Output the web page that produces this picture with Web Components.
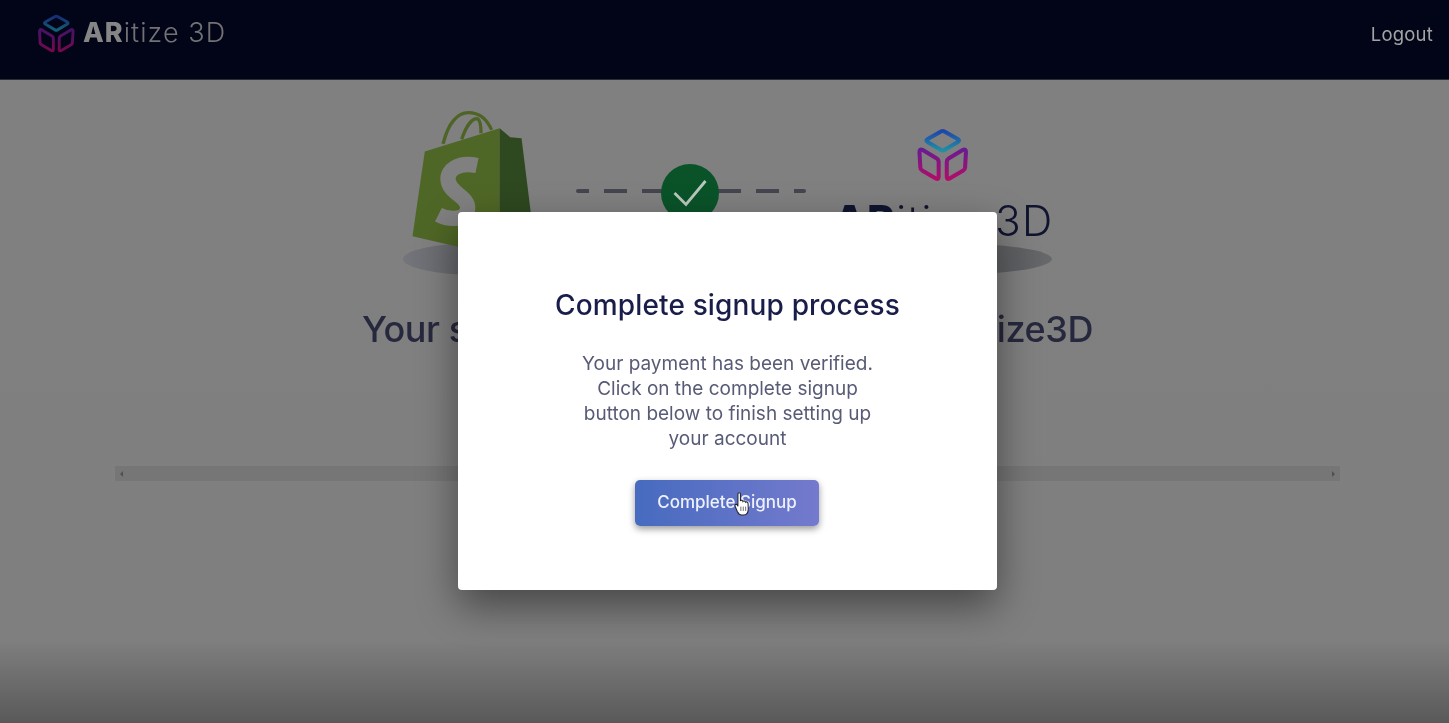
<!DOCTYPE html>
<html lang="en">
<head>
<meta charset="utf-8">
<title>ARitize 3D</title>
<style>
  html, body { margin: 0; height: 100%; }
  body { font-family: "Inter", "Open Sans", sans-serif; overflow: hidden; }
</style>
</head>
<body>
<app-page></app-page>

<script>
(function () {
    "use strict";

    function define(name, css, html) {
        customElements.define(name, class extends HTMLElement {
            constructor() {
                super();
                this.attachShadow({ mode: "open" }).innerHTML = "<style>" + css + "</style>" + html;
            }
        });
    }

    // cube mark, shared by header and hero. dim lowers it for the header
    define("cube-mark", `
        :host { display: block; width: var(--size, 54px); height: var(--size, 54px); opacity: var(--dim, 1); }
        svg { display: block; width: 100%; height: 100%; }
    `, `
        <svg viewBox="0 0 54 56" fill="none" stroke-width="4.2" stroke-linejoin="round">
            <defs>
                <linearGradient id="top" x1="0" y1="0" x2="0" y2="1">
                    <stop offset="0" stop-color="#1f45a8"/><stop offset="1" stop-color="#1f8fa8"/>
                </linearGradient>
                <linearGradient id="side" gradientUnits="userSpaceOnUse" x1="0" y1="20" x2="0" y2="54">
                    <stop offset="0" stop-color="#641c94"/><stop offset="1" stop-color="#b30c68"/>
                </linearGradient>
            </defs>
            <path stroke="url(#top)" d="M25 3.6 Q26.7 2.6 28.4 3.6 L42.6 11.6 Q44.6 13 42.6 14.4 L28.4 22.8 Q26.7 23.8 25 22.8 L10.8 14.4 Q8.8 13 10.8 11.6 Z"/>
            <path stroke="url(#side)" d="M2.6 25 Q2.6 21 6 22.8 L20.6 31.6 Q22.5 32.8 22.5 35 L22.5 50.6 Q22.5 54 19.6 52.4 L5.4 44 Q3.6 43 3.5 41 Z"/>
            <path stroke="url(#side)" d="M50.8 25 Q50.8 21 47.4 22.8 L32.8 31.6 Q30.9 32.8 30.9 35 L30.9 50.6 Q30.9 54 33.8 52.4 L48 44 Q49.8 43 49.9 41 Z"/>
        </svg>
    `);

    define("app-header", `
        :host {
            display: flex; align-items: flex-start; justify-content: space-between;
            height: 79px; padding: 0 16px 0 37px;
            background: #020418; border-bottom: 1px solid #2c2d33;
        }
        .brand { display: flex; align-items: center; gap: 7px; margin-top: 14px; --size: 39px; --dim: .65; }
        .word { font-size: 27px; font-weight: 300; color: #727274; letter-spacing: 1.05px; line-height: 36px; margin-bottom: 2px; }
        b { font-weight: 800; color: #858586; }
        .logout { margin-top: 22px; font-size: 18.5px; line-height: 24px; color: #a3a3a5; letter-spacing: .2px; }
    `, `
        <div class="brand"><cube-mark></cube-mark><span class="word"><b>AR</b>itize 3D</span></div>
        <span class="logout">Logout</span>
    `);

    define("shopify-bag", `
        :host { display: block; width: 140px; height: 143px; }
        svg { display: block; width: 100%; height: 100%; }
    `, `
        <svg viewBox="40 30 420 430" fill="none">
            <path d="M160 132 C176 66 205 38 236 38 C268 38 292 58 306 90" stroke="#4e6426" stroke-width="10"/>
            <path d="M216 118 C230 76 248 56 262 56 C270 58 274 76 274 100" stroke="#4e6426" stroke-width="10"/>
            <path d="M105 155 L330 85 L330 470 L68 410 Z" fill="#4f6726"/>
            <path d="M330 85 L362 112 L396 115 L440 470 L330 470 Z" fill="#2e4820"/>
            <path d="M262 197 C205 185 172 212 175 240 C178 280 236 290 234 325 C232 362 180 362 146 345" stroke="#808080" stroke-width="46"/>
        </svg>
    `);

    define("connect-line", `
        :host { display: flex; align-items: center; width: 230px; height: 60px; position: relative; }
        .dashes { width: 100%; height: 4px; margin-top: -6px; border-radius: 2px;
            background: linear-gradient(90deg, #44454f 0 23px, transparent 23px) -10px 0 / 38px 100% repeat-x; }
        svg { position: absolute; left: 85px; top: 0; width: 58px; height: 58px; }
    `, `
        <div class="dashes"></div>
        <svg viewBox="0 0 58 58">
            <circle cx="29" cy="29" r="29" fill="#0a5329"/>
            <path d="M13.5 29 L25 40.5 L44.5 17" fill="none" stroke="#b9c8bc" stroke-width="2.8"/>
        </svg>
    `);

    define("hero-row", `
        :host { display: flex; align-items: flex-start; justify-content: center; padding: 30px 0 0 6px; position: relative; }
        .shop { width: 140px; position: relative; }
        .shop::after, .ar::after {
            content: ""; position: absolute; top: 133px; height: 32px; border-radius: 50%; z-index: 0;
            background: linear-gradient(90deg, #73757a, #55565a);
        }
        .shop::after { left: 0; width: 150px; }
        shopify-bag { position: relative; z-index: 1; }
        connect-line { margin: 54px 29px 0 33px; }
        .ar { width: 217px; position: relative; display: flex; flex-direction: column; align-items: center; }
        .ar::after { left: 0; right: 0; background: linear-gradient(90deg, #7a7a7c, #5f6063 85%, #68696b); }
        .ar cube-mark { margin: 18px 2px 0 0; }
        .word { position: relative; z-index: 1; font-size: 42px; font-weight: 300; line-height: 48px; letter-spacing: 1.4px; color: #10142f; white-space: nowrap; margin-top: 15px; }
        b { font-weight: 800; }
    `, `
        <div class="shop"><shopify-bag></shopify-bag></div>
        <connect-line></connect-line>
        <div class="ar"><cube-mark></cube-mark><div class="word"><b>AR</b>itize 3D</div></div>
    `);

    define("scroll-track", `
        :host { display: flex; justify-content: space-between; align-items: center; height: 15px; margin: 0 109px 0 115px; padding: 0 5px; background: #767676; }
        i { width: 0; height: 0; border: 3px solid transparent; }
        .l { border-right-color: #505052; border-left-width: 0; }
        .r { border-left-color: #505052; border-right-width: 0; }
    `, `<i class="l"></i><i class="r"></i>`);

    define("hand-cursor", `
        :host { position: absolute; left: 99px; top: 12px; width: 16px; height: 24px; }
        svg { display: block; width: 100%; height: 100%; }
    `, `
        <svg viewBox="0 0 15 23">
            <path d="M3.6 2 C3.6 .4 6 .4 6 2 L6 8.6 C6.4 7.6 8.2 7.8 8.4 9 C9 8.2 10.6 8.5 10.8 9.8 C11.5 9.1 13.2 9.5 13.3 11 L13.5 16 C13.5 19.6 11.8 22 9 22 L7.2 22 C5 22 4 20.6 3 18.6 L.9 13.6 C.4 12.2 2 11.2 3 12.4 L3.6 13.6 Z" fill="#fff" stroke="#23242c" stroke-width="1"/>
            <path d="M6.4 14v4.2M8.7 14v4.2M11 14v4.2" stroke="#55565c" stroke-width=".8"/>
        </svg>
    `);

    define("gradient-button", `
        :host {
            display: flex; align-items: center; justify-content: center; position: relative;
            width: 184px; height: 46px; margin-right: 1px; padding-bottom: 2px; box-sizing: border-box; border-radius: 5px;
            color: #eef1fb; font-size: 17px; font-weight: 500;
            background: linear-gradient(90deg, #466bbf, #747acd);
            box-shadow: 0 3px 7px rgba(0,0,0,.4);
        }
    `, `<slot></slot><hand-cursor></hand-cursor>`);

    define("signup-modal", `
        :host {
            display: flex; flex-direction: column; align-items: center; box-sizing: border-box;
            width: 539px; height: 378px; padding-top: 73px; border-radius: 4px; background: #fff;
            box-shadow: 0 16px 40px rgba(0,0,0,.45);
            text-align: center;
        }
        h2 { margin: 0 0 26px; font-size: 28px; line-height: 40px; font-weight: 500; letter-spacing: .15px; color: #191d4a; white-space: nowrap; }
        p { margin: 0 0 29px; width: 310px; font-size: 19px; line-height: 25px; color: #585b76; }
    `, `
        <h2><slot name="title"></slot></h2>
        <p><slot></slot></p>
        <gradient-button><slot name="action"></slot></gradient-button>
    `);

    define("app-page", `
        :host { display: block; height: 723px; overflow: hidden; position: relative; filter: blur(.4px); }
        main {
            position: relative; height: 643px;
            background: linear-gradient(180deg, #808080 0, #7f7f7f 560px, #595959 643px);
        }
        h1 { margin: 54px 0 0; padding-left: 6px; height: 44px; text-align: center; font-size: 36px; line-height: 44px; letter-spacing: -.45px; font-weight: 500; color: #26283e; white-space: nowrap; }
        .gap { height: 115px; }
        .overlay { position: absolute; inset: 0; z-index: 2; padding: 0 0 2px 6px; display: flex; align-items: center; justify-content: center; }
    `, `
        <app-header></app-header>
        <main>
            <hero-row></hero-row>
            <h1>Your store is now connected with ARitize3D</h1>
            <div class="gap"></div>
            <scroll-track></scroll-track>
            <div class="overlay">
                <signup-modal>
                    <span slot="title">Complete signup process</span>
                    Your payment has been verified. Click on the complete signup button below to finish setting up your account
                    <span slot="action">Complete Signup</span>
                </signup-modal>
            </div>
        </main>
    `);
}())
</script>
</body>
</html>
